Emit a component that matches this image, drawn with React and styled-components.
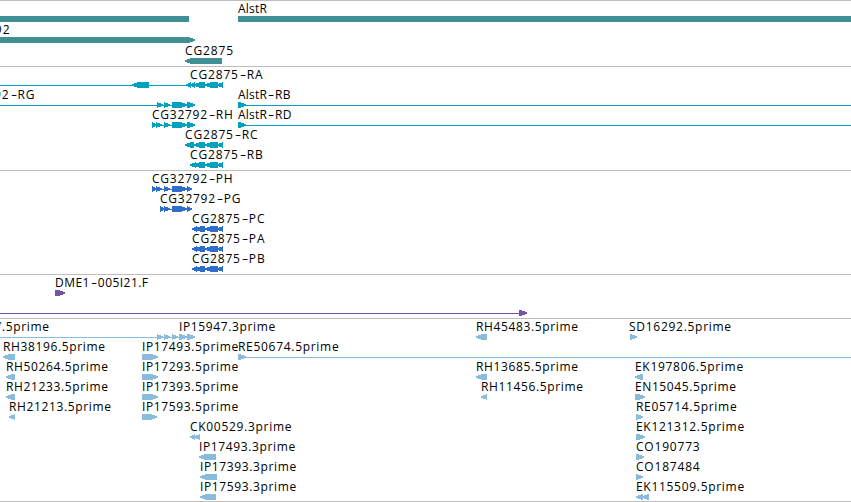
import styled, { createGlobalStyle } from "styled-components";

const teal = "#3f8f94";
const cyan = "#00a0bf";
const blue = "#2f6dcc";
const purple = "#7353a7";
const sky = "#88bbdc";

// A label is [start, text, letter spacing].
// A segment is [start, end, direction], an intron line is [start, end].
const tracks = [
  {
    name: "genes",
    color: teal,
    laneHeight: 21,
    lanes: [
      { labels: [[238, "AlstR", 0.2]], segments: [[0, 189], [238, 851]] },
      { labels: [[-47, "CG32792", 1]], segments: [[0, 195, "right"]] },
      { labels: [[185, "CG2875", 0.9]], segments: [[185, 222, "left"]] },
    ],
  },
  {
    name: "transcripts",
    color: cyan,
    lanes: [
      {
        labels: [[190, "CG2875-RA", 0.85]],
        lines: [[0, 223]],
        segments: [[132, 149, "left"], [186, 191, "left"], [190, 195, "left"], [194, 205, "left"], [205, 218, "left"], [217, 223, "left"]],
      },
      {
        labels: [[-47, "CG32792-RG", 0.85], [238, "AlstR-RB", 0.2]],
        lines: [[0, 195], [238, 851]],
        segments: [[157, 163, "right"], [164, 170, "right"], [172, 187, "right"], [187, 195, "right"], [238, 246, "right"]],
      },
      {
        labels: [[152, "CG32792-RH", 0.75], [238, "AlstR-RD", 0.2]],
        lines: [[152, 195], [238, 851]],
        segments: [[152, 157, "right"], [156, 162, "right"], [164, 170, "right"], [172, 187, "right"], [187, 195, "right"], [238, 246, "right"]],
      },
      {
        labels: [[185, "CG2875-RC", 0.85]],
        lines: [[185, 223]],
        segments: [[185, 194, "left"], [194, 205, "left"], [205, 218, "left"], [217, 223, "left"]],
      },
      {
        labels: [[190, "CG2875-RB", 0.85]],
        lines: [[190, 223]],
        segments: [[190, 196, "left"], [194, 205, "left"], [205, 218, "left"], [217, 223, "left"]],
      },
    ],
  },
  {
    name: "proteins",
    color: blue,
    lanes: [
      {
        labels: [[152, "CG32792-PH", 0.75]],
        lines: [[152, 192]],
        segments: [[152, 157, "right"], [156, 162, "right"], [164, 170, "right"], [172, 187, "right"], [187, 192, "right"]],
      },
      {
        labels: [[160, "CG32792-PG", 0.75]],
        lines: [[160, 192]],
        segments: [[160, 165, "right"], [164, 170, "right"], [172, 187, "right"], [187, 192, "right"]],
      },
      ...["CG2875-PC", "CG2875-PA", "CG2875-PB"].map((text) => ({
        labels: [[192, text, 0.85]],
        lines: [[192, 223]],
        segments: [[192, 197, "left"], [195, 205, "left"], [205, 218, "left"], [217, 223, "left"]],
      })),
    ],
  },
  {
    name: "clones",
    color: purple,
    lanes: [
      { labels: [[55, "DME1-005I21.F", 0.45]], segments: [[55, 65, "right"]] },
      { labels: [], lines: [[0, 527]], segments: [[519, 527, "right"]] },
    ],
  },
  {
    name: "ests",
    color: sky,
    lanes: [
      {
        labels: [[-13, "17.5prime"], [179, "IP15947.3prime"], [476, "RH45483.5prime"], [629, "SD16292.5prime", 0.72]],
        lines: [[0, 195]],
        segments: [[157, 163, "right"], [164, 170, "right"], [172, 178, "right"], [179, 187, "right"], [187, 195, "right"], [476, 487, "left"], [630, 637, "right"]],
      },
      {
        labels: [[3, "RH38196.5prime"], [142, "IP17493.5prime"], [238, "RE50674.5prime", 0.7]],
        lines: [[238, 851]],
        segments: [[3, 15, "left"], [142, 158, "right"], [238, 246, "right"]],
      },
      {
        labels: [[6, "RH50264.5prime"], [142, "IP17293.5prime"], [476, "RH13685.5prime"], [635, "EK197806.5prime", 0.7]],
        segments: [[6, 15, "left"], [142, 158, "right"], [476, 487, "left"], [635, 643, "left"]],
      },
      {
        labels: [[6, "RH21233.5prime"], [142, "IP17393.5prime"], [481, "RH11456.5prime"], [635, "EN15045.5prime", 0.6]],
        segments: [[6, 15, "left"], [142, 158, "right"], [481, 487, "left"], [635, 645, "right"]],
      },
      {
        labels: [[9, "RH21213.5prime"], [142, "IP17593.5prime"], [636, "RE05714.5prime", 0.7]],
        segments: [[9, 15, "left"], [142, 157, "right"], [636, 643, "right"]],
      },
      {
        labels: [[190, "CK00529.3prime", 0.7], [636, "EK121312.5prime", 0.7]],
        segments: [[190, 195, "left"], [194, 200, "left"], [636, 645, "right"]],
      },
      { labels: [[199, "IP17493.3prime"], [636, "CO190773", 0.8]], segments: [[199, 216, "left"], [636, 644, "right"]] },
      { labels: [[200, "IP17393.3prime"], [636, "CO187484", 0.8]], segments: [[200, 217, "left"], [636, 643, "right"]] },
      {
        labels: [[200, "IP17593.3prime"], [636, "EK115509.5prime", 0.7]],
        segments: [[200, 216, "left"], [636, 643, "left"], [642, 649, "left"]],
      },
    ],
  },
];

const segmentPoints = ([start, end, direction]) => {
  const tip = Math.min(6, end - start);
  if (direction === "right") {
    return `${start},0 ${end - tip},0 ${end},2.5 ${end},3.5 ${end - tip},6 ${start},6`;
  }
  if (direction === "left") {
    return `${end},0 ${start + tip},0 ${start},2.5 ${start},3.5 ${start + tip},6 ${end},6`;
  }
  return `${start},0 ${end},0 ${end},6 ${start},6`;
};

const FeatureLabel = ({ start, text, spacing }) => {
  const [gene, product] = text.split("-");

  return (
    <Label $start={start} $spacing={spacing}>
      {gene}
      {product && <Hyphen>-</Hyphen>}
      {product}
    </Label>
  );
};

const FeatureLane = ({ lane, color, height }) => (
  <Lane $height={height}>
    <Labels>
      {lane.labels.map(([start, text, spacing]) => (
        <FeatureLabel key={text} start={start} text={text} spacing={spacing} />
      ))}
    </Labels>
    <Glyphs width="851" height="6" fill={color}>
      {(lane.lines || []).map(([start, end]) => (
        <rect key={start} x={start} y="3" width={end - start} height="1" />
      ))}
      {lane.segments.map((segment) => (
        <polygon key={segment[0]} points={segmentPoints(segment)} />
      ))}
    </Glyphs>
  </Lane>
);

const App = () => (
  <>
    <GlobalStyle />
    <Browser>
      {tracks.map(({ name, color, laneHeight, lanes }) => (
        <Track key={name}>
          {lanes.map((lane, index) => (
            <FeatureLane key={index} lane={lane} color={color} height={laneHeight || 20} />
          ))}
        </Track>
      ))}
    </Browser>
  </>
);

export default App;

// Styled Components
const GlobalStyle = createGlobalStyle`
  body {
    margin: 0;
    background: #fff;
    overflow: hidden;
  }
`;

const Browser = styled.main`
  display: flex;
  flex-direction: column;
  width: 851px;
  height: 502px;
  box-sizing: border-box;
  overflow: hidden;
  border-bottom: 1px solid #bebebe;
  color: #000;
  font: 12px/15px "Open Sans", "Noto Sans", sans-serif;
`;

const Track = styled.section`
  flex: none;
  border-top: 1px solid #bebebe;
  padding-bottom: 3px;

  &:first-child,
  &:last-child {
    padding-bottom: 2px;
  }
`;

const Lane = styled.div`
  display: flex;
  flex-direction: column;
  height: ${({ $height }) => $height}px;
`;

/* every label shares one cell, so neighbours may run into each other */
const Labels = styled.div`
  display: grid;
  grid-template-columns: 851px;
  flex: none;
  height: 15px;
`;

const Label = styled.span`
  grid-area: 1 / 1;
  justify-self: start;
  margin-left: ${({ $start }) => $start}px;
  letter-spacing: ${({ $spacing = 0.63 }) => $spacing}px;
  white-space: nowrap;
`;

const Hyphen = styled.span`
  display: inline-block;
  width: 8px;
  letter-spacing: 0;
  text-align: center;
  transform: scaleX(1.6);
`;

const Glyphs = styled.svg`
  display: block;
  flex: none;
  shape-rendering: crispEdges;
`;
